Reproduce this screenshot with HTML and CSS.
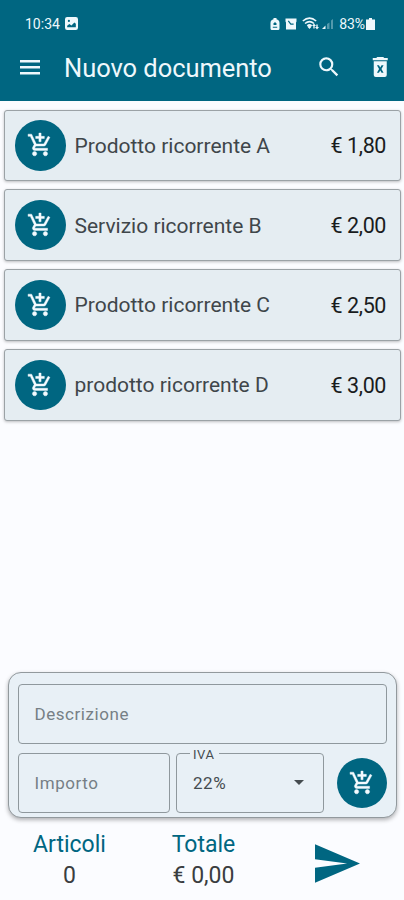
FILE: index.html
```html
<!DOCTYPE html>
<html lang="it">
<head>
    <meta charset="UTF-8">
    <meta name="viewport" content="width=device-width, initial-scale=1.0">
    <title>Nuovo documento</title>
    <link rel="stylesheet" href="styles.css">
</head>
<body>
    <svg class="symbols">
        <symbol id="cart" viewBox="0 0 24 24">
            <path d="M11 9h2V6h3V4h-3V1h-2v3H8v2h3v3zm-4 9c-1.1 0-1.99.9-1.99 2S5.9 22 7 22s2-.9 2-2-.9-2-2-2zm10 0c-1.1 0-1.99.9-1.99 2s.89 2 1.99 2 2-.9 2-2-.9-2-2-2zm-9.83-3.25l.03-.12.9-1.63h7.45c.75 0 1.41-.41 1.75-1.03l3.86-7.01L19.42 4h-.01l-1.1 2-2.76 5H8.53l-.13-.27L6.16 6l-.95-2-.94-2H1v2h2l3.6 7.59-1.35 2.45c-.16.28-.25.61-.25.96 0 1.1.9 2 2 2h12v-2H7.42c-.13 0-.25-.11-.25-.25z"/>
        </symbol>
    </svg>

    <header class="header">
        <!-- barra di stato -->
        <div class="status-bar">
            <span class="clock">10:34</span>
            <svg class="status-photo" viewBox="0 0 12 12"><path fill-rule="evenodd" d="M2 0h8a2 2 0 0 1 2 2v8a2 2 0 0 1-2 2H2a2 2 0 0 1-2-2V2a2 2 0 0 1 2-2zM2 9.5h8V6.2L8.6 5 6 7.8 4 6.4 2 8zM3.6 2.6a1 1 0 1 0 0 2 1 1 0 0 0 0-2z"/></svg>
            <div class="status-icons">
                <svg width="10" height="12" viewBox="0 0 10 12"><path fill-rule="evenodd" d="M3.5 0h3v1.3C8.3 1.8 9.5 3 9.5 5v5.5A1.5 1.5 0 0 1 8 12H2A1.5 1.5 0 0 1 .5 10.5V5c0-2 1.2-3.2 3-3.7zM5 4 2.8 6.2h.9v.8h2.6v-.8h.9zM2.8 8.7v1h4.4v-1z"/></svg>
                <svg width="12" height="12" viewBox="0 0 12 12"><path d="M.5.5h11v3l-.5 1v7H1v-7l-.5-1z"/><path class="cut" d="M3.3 2.8 5.8 6.2H8.6"/></svg>
                <svg class="wifi" width="18" height="13" viewBox="0 0 18 13"><path class="arc" d="M.8 4Q7.5-1.8 14.2 4M3 6.5q4.5-3.8 9 0M5.3 8.9q2.2-2 4.4 0"/><path d="m7.5 12 2-2.2-2-1.5-2 1.5zM12 6.5 14 9h-1.3v2.5h-1.4V9H10zM14.3 7.5h1.4V10H17l-2 2.5-2-2.5h1.3z"/></svg>
                <svg width="12" height="12" viewBox="0 0 12 12"><path d="M0 11 3.5 7.5V11z"/><path d="M5 6 7.5 4.5V11H5zM9 2.5 11 1v10H9z" opacity=".35"/></svg>
                <span class="battery-text">83%</span>
                <svg width="9" height="12" viewBox="0 0 9 12"><path d="M3 0h3v1.5h3V12H0V1.5h3z"/></svg>
            </div>
        </div>
        <div class="toolbar">
            <svg class="menu-icon" viewBox="0 0 20 15"><path d="M0 0h20v2.5H0zM0 6h20v2.5H0zM0 12h20v2.5H0z"/></svg>
            <h1 class="title">Nuovo documento</h1>
            <svg class="search-icon" viewBox="0 0 24 24"><path d="M15.5 14h-.79l-.28-.27A6.471 6.471 0 0 0 16 9.5 6.5 6.5 0 1 0 9.5 16c1.61 0 3.09-.59 4.23-1.57l.27.28v.79l5 4.99L20.49 19l-4.99-5zm-6 0C7.01 14 5 11.99 5 9.5S7.01 5 9.5 5 14 7.01 14 9.5 11.99 14 9.5 14z"/></svg>
            <svg class="trash-icon" viewBox="0 0 16 20"><path fill-rule="evenodd" d="M5 0h6l1 1.1h3.5v2.1H.5V1.1H4zM1.5 4.2h13V18a2 2 0 0 1-2 2h-9a2 2 0 0 1-2-2zM4.7 8.2 6.8 12l-2.1 3.8h2L8 13.4l1.3 2.4h2L9.2 12l2.1-3.8h-2L8 10.6 6.7 8.2z"/></svg>
        </div>
    </header>

    <!-- prodotti ricorrenti -->
    <main class="product-list">
        <div class="product">
            <div class="cart-button"><svg><use href="#cart"/></svg></div>
            <span class="product-name">Prodotto ricorrente A</span>
            <span class="product-price">€ 1,80</span>
        </div>
        <div class="product">
            <div class="cart-button"><svg><use href="#cart"/></svg></div>
            <span class="product-name">Servizio ricorrente B</span>
            <span class="product-price">€ 2,00</span>
        </div>
        <div class="product">
            <div class="cart-button"><svg><use href="#cart"/></svg></div>
            <span class="product-name">Prodotto ricorrente C</span>
            <span class="product-price">€ 2,50</span>
        </div>
        <div class="product">
            <div class="cart-button"><svg><use href="#cart"/></svg></div>
            <span class="product-name">prodotto ricorrente D</span>
            <span class="product-price">€ 3,00</span>
        </div>
    </main>

    <!-- nuova riga -->
    <section class="entry-form">
        <div class="field">Descrizione</div>
        <div class="entry-row">
            <div class="field amount">Importo</div>
            <div class="field vat">
                <span class="vat-label">IVA</span>
                <span class="vat-value">22%</span>
                <svg class="arrow" viewBox="0 0 10 5"><path d="M0 0h10L5 5z"/></svg>
            </div>
            <div class="cart-button"><svg><use href="#cart"/></svg></div>
        </div>
    </section>

    <footer class="footer">
        <div class="total articles">
            <span class="total-label">Articoli</span>
            <span class="total-value">0</span>
        </div>
        <div class="total sum">
            <span class="total-label">Totale</span>
            <span class="total-value">€ 0,00</span>
        </div>
        <svg class="send-icon" viewBox="2 3 21 18"><path d="M2.01 21 23 12 2.01 3 2 10l15 2-15 2z"/></svg>
    </footer>
</body>
</html>
```
FILE: styles.css
```css
* {
    box-sizing: border-box;
}
body {
    display: flex;
    flex-direction: column;
    height: 900px;
    margin: 0;
    overflow: hidden;
    background-color: #fbfcff;
    color: #191c1e;
    font-family: Roboto, "Liberation Sans", sans-serif;
}
svg {
    display: block;
    flex-shrink: 0;
    fill: currentColor;
}
.symbols {
    position: absolute;
    width: 0;
    height: 0;
}
.header {
    height: 100.5px;
    background-color: #006681;
    color: #eef8fc;
}
.status-bar {
    display: flex;
    align-items: center;
    height: 47px;
    padding: 0 29px 0 25px;
    font-size: 14px;
}
.status-photo {
    width: 13px;
    height: 13px;
    margin-left: 5px;
}
.status-icons {
    display: flex;
    align-items: center;
    margin-left: auto;
}
.status-icons svg {
    margin-right: 5px;
}
.status-icons svg:last-child {
    margin: 0 0 0 1px;
}
.status-icons .wifi {
    margin-right: 2px;
}
.battery-text {
    letter-spacing: -0.1px;
}
.cut,
.arc {
    fill: none;
    stroke: #006681;
    stroke-width: 1.2;
}
.arc {
    stroke: currentColor;
    stroke-width: 1.5;
}
.toolbar {
    display: flex;
    align-items: center;
    height: 40px;
    padding: 0 16px 0 20px;
}
.menu-icon {
    width: 20px;
    height: 15px;
}
.title {
    margin: 2px 0 0 24px;
    font-size: 25.5px;
    font-weight: 400;
    line-height: 32px;
    letter-spacing: -0.05px;
}
.search-icon {
    width: 26px;
    height: 26px;
    margin-left: auto;
}
.trash-icon {
    width: 16.5px;
    height: 20px;
    margin-left: 30px;
}
.product-list {
    display: flex;
    flex-direction: column;
    gap: 8px;
    padding: 9px 3px 0 4px;
}
.product {
    display: flex;
    align-items: center;
    height: 71.8px;
    padding: 0 14px 0 10px;
    border: 1px solid #9ba2a6;
    border-radius: 3px;
    background-color: #e5edf2;
    box-shadow: 0 1px 3px rgba(0, 0, 0, 0.25);
}
.cart-button {
    display: flex;
    align-items: center;
    justify-content: center;
    flex-shrink: 0;
    width: 50.5px;
    height: 50.5px;
    border-radius: 50%;
    background-color: #006681;
    color: #f4fbff;
}
.cart-button svg {
    width: 26px;
    height: 26px;
    stroke: currentColor;
    stroke-width: 0.4;
}
.product-name {
    margin: 1px auto 0 9px;
    color: #3f464a;
    font-size: 21px;
}
.product-price {
    margin-top: 1px;
    font-size: 21.5px;
    letter-spacing: -0.4px;
}
.entry-form {
    display: flex;
    flex-direction: column;
    gap: 9.5px;
    height: 146px;
    margin: auto 7px 0 7.5px;
    padding: 11px 9px 0;
    border: 1px solid #92999d;
    border-radius: 13px;
    background-color: #e8f0f6;
    box-shadow: 0 2px 4px rgba(0, 0, 0, 0.3);
}
.field {
    display: flex;
    align-items: center;
    height: 59.5px;
    padding: 0 16px;
    border: 1px solid #8f989d;
    border-radius: 4px;
    color: #767f85;
    font-size: 17px;
    letter-spacing: 0.55px;
}
.entry-row {
    display: flex;
    align-items: center;
}
.amount {
    width: 153px;
}
.vat {
    position: relative;
    width: 148px;
    margin: 0 13px 0 6px;
    color: #454c50;
}
.vat-label {
    position: absolute;
    top: -7px;
    left: 13px;
    padding: 0 5px 0 3px;
    background-color: #e8f0f6;
    font-size: 13px;
    line-height: 16px;
}
.arrow {
    width: 10px;
    height: 5px;
    margin-left: auto;
    margin-right: 3px;
}
.footer {
    display: flex;
    align-items: center;
    height: 82px;
}
.total {
    display: flex;
    flex-direction: column;
    align-items: center;
    margin-top: 1px;
    line-height: 31px;
}
.articles {
    width: 139px;
}
.sum {
    width: 129px;
}
.total-label {
    color: #006681;
    font-size: 23px;
}
.total-value {
    color: #3a3d40;
    font-size: 23px;
}
.send-icon {
    width: 45px;
    height: 39px;
    margin: 9px 0 0 46.5px;
    color: #006681;
}
```
